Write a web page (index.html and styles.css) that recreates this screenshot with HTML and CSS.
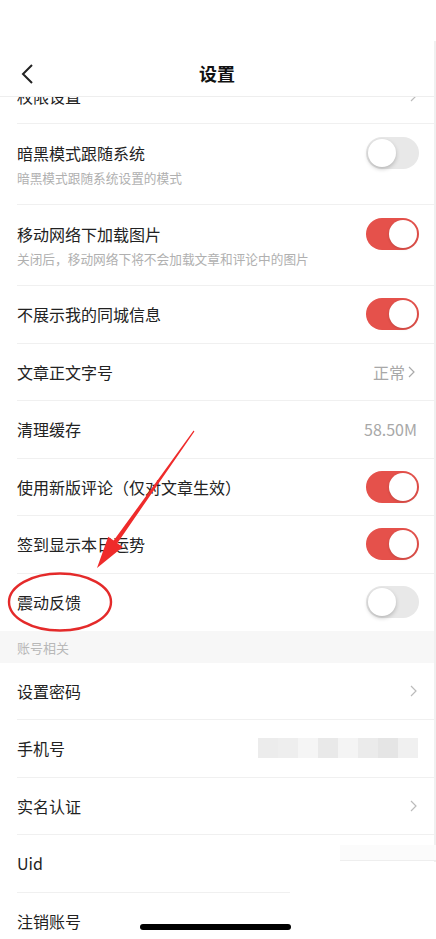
FILE: index.html
```html
<!DOCTYPE html>
<html lang="zh-CN">
<head>
    <meta charset="utf-8">
    <title>设置</title>
    <link rel="stylesheet" href="styles.css">
</head>
<body>
<div class="phone">
    <div class="status"></div>
    <div class="screen">
        <div class="header">
            <svg class="back" width="14" height="22" viewBox="0 0 14 22"><path d="M12 2 L3 11 L12 20" fill="none" stroke="#222" stroke-width="2"/></svg>
            <div class="title">设置</div>
        </div>

        <div class="row cut">
            <div class="cut-in">
                <span class="label">权限设置</span>
                <svg class="chev" width="7" height="12" viewBox="0 0 7 12"><path d="M1 1 L6 6 L1 11" fill="none" stroke="#bbb" stroke-width="1.2"/></svg>
            </div>
        </div>

        <div class="row tall">
            <div class="text">
                <div class="label">暗黑模式跟随系统</div>
                <div class="hint">暗黑模式跟随系统设置的模式</div>
            </div>
            <span class="switch"></span>
        </div>
        <div class="row tall">
            <div class="text">
                <div class="label">移动网络下加载图片</div>
                <div class="hint">关闭后，移动网络下将不会加载文章和评论中的图片</div>
            </div>
            <span class="switch on"></span>
        </div>
        <div class="row">
            <span class="label">不展示我的同城信息</span>
            <span class="switch on"></span>
        </div>
        <div class="row">
            <span class="label">文章正文字号</span>
            <span class="value">正常<svg class="chev" width="7" height="12" viewBox="0 0 7 12"><path d="M1 1 L6 6 L1 11" fill="none" stroke="#aaa" stroke-width="1.2"/></svg></span>
        </div>
        <div class="row">
            <span class="label">清理缓存</span>
            <span class="value">58.50M</span>
        </div>
        <div class="row">
            <span class="label">使用新版评论（仅对文章生效）</span>
            <span class="switch on"></span>
        </div>
        <div class="row">
            <span class="label">签到显示本日运势</span>
            <span class="switch on"></span>
        </div>
        <div class="row last">
            <span class="label">震动反馈</span>
            <span class="switch"></span>
        </div>

        <div class="section">账号相关</div>

        <div class="row">
            <span class="label">设置密码</span>
            <svg class="chev" width="7" height="12" viewBox="0 0 7 12"><path d="M1 1 L6 6 L1 11" fill="none" stroke="#bbb" stroke-width="1.2"/></svg>
        </div>
        <div class="row">
            <span class="label">手机号</span>
            <span class="blur">
                <i style="background:#ececec"></i><i style="background:#eeeeee"></i><i style="background:#f5f5f5"></i><i style="background:#e9e9e9"></i>
                <i style="background:#f4f4f4"></i><i style="background:#ebebeb"></i><i style="background:#e5e5e5"></i><i style="background:#f0f0f0"></i>
            </span>
        </div>
        <div class="row">
            <span class="label">实名认证</span>
            <svg class="chev" width="7" height="12" viewBox="0 0 7 12"><path d="M1 1 L6 6 L1 11" fill="none" stroke="#bbb" stroke-width="1.2"/></svg>
        </div>
        <div class="row">
            <span class="label">Uid</span>
        </div>
        <div class="row">
            <span class="label">注销账号</span>
        </div>
    </div>

    <div class="patch"></div>
    <div class="home-area"></div>
    <div class="home-bar"></div>

    <svg class="marks" width="436" height="939" viewBox="0 0 436 939">
        <polygon points="193.6,430.6 194.4,431.4 117.3,543.2 122.8,547.1 97,568 108.2,536.7 113.7,540.6" fill="#ef2b2b"/>
        <ellipse cx="60" cy="602" rx="51" ry="28.5" fill="none" stroke="#e42a2a" stroke-width="2.4"/>
    </svg>
</div>
</body>
</html>
```

FILE: styles.css
```css
body {
    margin: 0;
    background: #fff;
    font-family: "Noto Sans CJK SC", "Noto Sans", sans-serif;
    color: #222;
    overflow: hidden;
}

.phone {
    position: relative;
    width: 436px;
    height: 939px;
    overflow: hidden;
}

.status {
    height: 41px;
}

.screen {
    width: 434px;
    border-right: 2px solid #f0f0f0;
}

.header {
    height: 55px;
    border-bottom: 1px solid #eeeeee;
    display: flex;
    align-items: center;
    justify-content: center;
    position: relative;
    z-index: 2;
    background: #fff;
}

.back {
    position: absolute;
    left: 20px;
    top: 22px;
}

.title {
    font-size: 18px;
    font-weight: bold;
    color: #111;
    margin-top: 9px;
}

.row {
    margin-left: 17px;
    padding-right: 15px;
    min-height: 56.5px;
    border-bottom: 1px solid #f0f0f0;
    display: flex;
    align-items: center;
    justify-content: space-between;
    box-sizing: content-box;
}

.row.last {
    border-bottom: none;
    min-height: 57px;
}

.label {
    font-size: 16px;
    line-height: 22px;
    color: #222;
}

.row.cut {
    min-height: 0;
    height: 26px;
    overflow: hidden;
    display: block;
}

.cut-in {
    margin-top: -30px;
    height: 57px;
    display: flex;
    align-items: center;
    justify-content: space-between;
}

.row.tall {
    min-height: 0;
    height: 80px;
    align-items: flex-start;
}

.text {
    padding-top: 18px;
}

.hint {
    margin-top: 5px;
    font-size: 12.7px;
    line-height: 18px;
    color: #b0b0b0;
}

.row.tall .switch {
    margin-top: 13px;
}

.switch {
    position: relative;
    width: 53px;
    height: 32px;
    border-radius: 16px;
    background: #e8e8e8;
    flex-shrink: 0;
}

.switch:after {
    content: "";
    position: absolute;
    top: 2px;
    left: 2px;
    width: 28px;
    height: 28px;
    border-radius: 50%;
    background: #fff;
    box-shadow: 0 2px 4px rgba(0, 0, 0, 0.22);
}

.switch.on {
    background: #e5514b;
}

.switch.on:after {
    left: 23px;
    box-shadow: 0 1px 3px rgba(0, 0, 0, 0.15);
}

.value {
    font-size: 16px;
    color: #a8a8a8;
    display: flex;
    align-items: center;
    gap: 3px;
    margin-right: 2px;
}

.chev {
    display: block;
    margin-right: 2px;
}

.section {
    height: 32px;
    line-height: 34px;
    background: #f7f7f7;
    padding-left: 17px;
    font-size: 13px;
    color: #b8b8b8;
}

.blur {
    display: flex;
    margin-right: 1px;
}

.blur i {
    display: block;
    width: 20px;
    height: 20px;
}

.patch {
    position: absolute;
    left: 340px;
    top: 845px;
    width: 96px;
    height: 15px;
    background: #fbfbfb;
    border-bottom: 1px solid #eeeeee;
}

.home-area {
    position: absolute;
    left: 290px;
    top: 862px;
    width: 146px;
    height: 77px;
    background: #fff;
}

.home-bar {
    position: absolute;
    left: 140px;
    top: 924px;
    width: 151px;
    height: 6px;
    border-radius: 3px;
    background: #000;
}

.marks {
    position: absolute;
    left: 0;
    top: 0;
    pointer-events: none;
}
```
